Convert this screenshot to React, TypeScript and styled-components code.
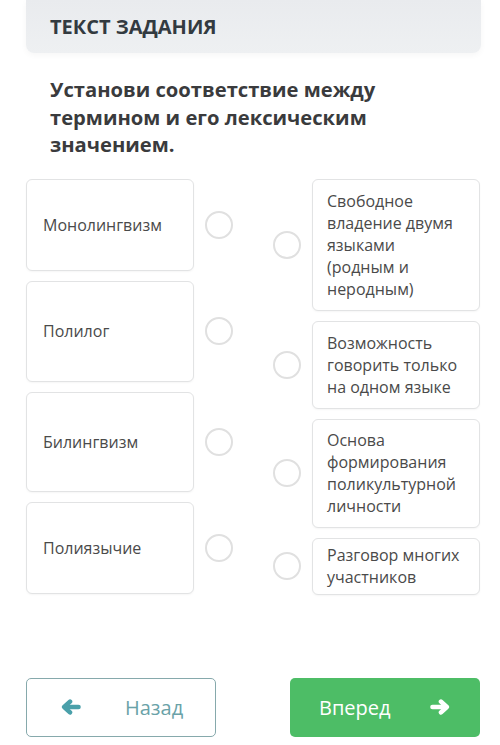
import styled, { createGlobalStyle } from "styled-components";

const GlobalStyle = createGlobalStyle`
  html, body {
    margin: 0;
    padding: 0;
    background: #ffffff;
  }
  body {
    font-family: "Open Sans", "Noto Sans", sans-serif;
    color: #3a3a3a;
  }
`;

const Page = styled.div`
  width: 500px;
  height: 745px;
  padding: 0 20px 0 26px;
  box-sizing: border-box;
  display: flex;
  flex-direction: column;
  overflow: hidden;
`;

const TaskHeader = styled.div`
  height: 53px;
  display: flex;
  align-items: center;
  padding-left: 24px;
  margin-right: -1px;
  background: linear-gradient(180deg, #e9ebee 0%, #eef0f2 100%);
  border-radius: 0 0 8px 8px;
  box-shadow: 0 2px 6px rgba(0, 0, 0, 0.04);
  font-size: 20px;
  font-weight: 700;
  color: #333a40;
`;

const Question = styled.h2`
  margin: 23px 0 0 24px;
  font-size: 20.2px;
  line-height: 27.5px;
  font-weight: 700;
  color: #3a3b3d;
  width: 360px;
`;

const Board = styled.div`
  margin-top: 20px;
  display: flex;
  gap: 40px;
`;

const Column = styled.div`
  width: 207px;
  display: flex;
  flex-direction: column;
  gap: 10px;
`;

const Row = styled.div<{ $h: number }>`
  height: ${(p) => p.$h}px;
  display: flex;
  align-items: center;
  gap: 11px;
`;

const Card = styled.div<{ $pad: number }>`
  width: 168px;
  height: 100%;
  box-sizing: border-box;
  display: flex;
  align-items: center;
  padding: 0 16px 0 ${(p) => p.$pad}px;
  background: #fff;
  border: 1px solid #e2e3e4;
  border-radius: 6px;
  box-shadow: 0 1px 2px rgba(0, 0, 0, 0.04);
  font-size: 16px;
  line-height: 22px;
  color: #4a4a4a;
`;

const Radio = styled.span`
  flex: none;
  width: 28px;
  height: 28px;
  box-sizing: border-box;
  border: 2.5px solid #e0e0e0;
  border-radius: 50%;
  background: #fff;
`;

const Footer = styled.div`
  margin-top: 83px;
  display: flex;
  justify-content: space-between;
`;

const NavButton = styled.button<{ $primary?: boolean }>`
  width: 190px;
  height: 59px;
  box-sizing: border-box;
  display: flex;
  align-items: center;
  border-radius: 5px;
  font-family: inherit;
  font-size: 20px;
  cursor: pointer;
  ${(p) =>
    p.$primary
      ? `
    background: #4dbd66;
    border: none;
    color: #ffffff;
    padding: 0 30px 0 29px;
    justify-content: space-between;
  `
      : `
    background: #ffffff;
    border: 1.5px solid #86a9ac;
    color: #6aa2a8;
    padding: 0 0 0 34px;
    gap: 44px;
  `}
`;

const Arrow = ({ dir, color }: { dir: "left" | "right"; color: string }) => (
  <svg
    width="20"
    height="16"
    viewBox="0 0 20 16"
    style={{ transform: dir === "right" ? "scaleX(-1)" : undefined }}
  >
    <g stroke={color} strokeWidth="4.6" strokeLinecap="round" strokeLinejoin="round" fill="none">
      <path d="M17.5 8H4" />
      <path d="M9 2.6L3.2 8L9 13.4" />
    </g>
  </svg>
);

const terms = [
  { text: "Монолингвизм", h: 92 },
  { text: "Полилог", h: 101 },
  { text: "Билингвизм", h: 100 },
  { text: "Полиязычие", h: 92 },
];

const meanings = [
  { text: "Свободное владение двумя языками (родным и неродным)", h: 132 },
  { text: "Возможность говорить только на одном языке", h: 88 },
  { text: "Основа формирования поликультурной личности", h: 109 },
  { text: "Разговор многих участников", h: 57 },
];

const App = () => {
  return (
    <Page>
      <GlobalStyle />
      <TaskHeader>ТЕКСТ ЗАДАНИЯ</TaskHeader>
      <Question>Установи соответствие между термином и его лексическим значением.</Question>
      <Board>
        <Column>
          {terms.map((t) => (
            <Row key={t.text} $h={t.h}>
              <Card $pad={16}>{t.text}</Card>
              <Radio />
            </Row>
          ))}
        </Column>
        <Column>
          {meanings.map((m) => (
            <Row key={m.text} $h={m.h}>
              <Radio />
              <Card $pad={14}>{m.text}</Card>
            </Row>
          ))}
        </Column>
      </Board>
      <Footer>
        <NavButton>
          <Arrow dir="left" color="#4aa0aa" />
          Назад
        </NavButton>
        <NavButton $primary>
          Вперед
          <Arrow dir="right" color="#ffffff" />
        </NavButton>
      </Footer>
    </Page>
  );
};

export default App;
